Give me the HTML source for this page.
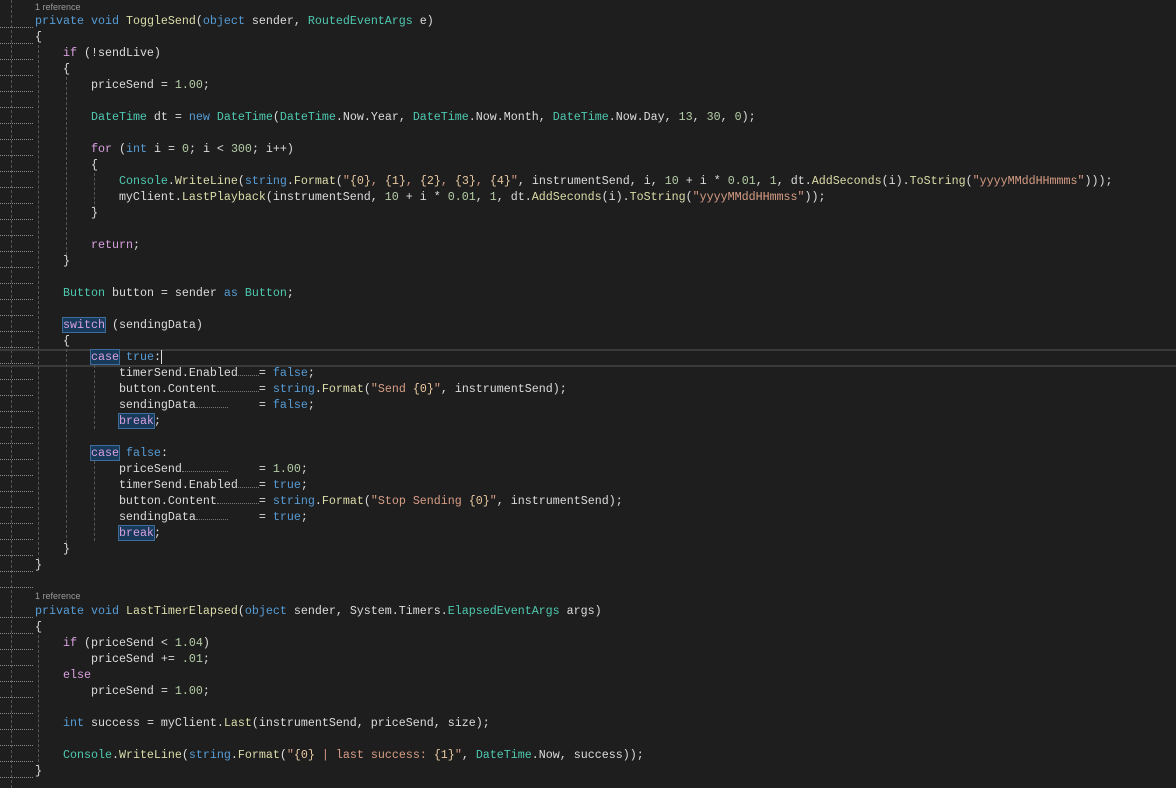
<!DOCTYPE html>
<html><head><meta charset="utf-8"><style>
html,body{margin:0;padding:0;background:#1e1e1e;width:1176px;height:788px;overflow:hidden;position:relative}
.l{position:absolute;left:35px;height:16px;line-height:16px;font-family:"Liberation Mono",monospace;font-size:11.67px;color:#dcdcdc;white-space:pre}
.k{color:#569cd6}.c{color:#d8a0df}.t{color:#4ec9b0}.m{color:#dcdcaa}.s{color:#d69d85}.n{color:#b5cea8}.p{color:#e8c9a0}
.h{background:#17395a;outline:1px solid #3f6d9a}
.d{display:inline-block;border-bottom:1px dotted #777;height:10px;vertical-align:top}
.sp{display:inline-block;height:10px;vertical-align:top}
.ref{position:absolute;left:35px;font-family:"Liberation Sans",sans-serif;font-size:9px;color:#999}
.g{position:absolute;width:0;border-left:1px dashed #555}
.mk{position:absolute;left:0;width:33px;border-top:1px dotted #888}
</style></head><body>
<div class="g" style="left:11px;top:0;height:788px"></div>
<div style="position:absolute;left:0;top:349px;width:1176px;height:14px;border-top:2px solid #3a3a3a;border-bottom:2px solid #3a3a3a"></div>
<div class="g" style="left:38px;top:45px;height:515px"></div>
<div class="g" style="left:66px;top:77px;height:178px"></div>
<div class="g" style="left:94px;top:173px;height:36px"></div>
<div class="g" style="left:66px;top:349px;height:194px"></div>
<div class="g" style="left:94px;top:365px;height:64px"></div>
<div class="g" style="left:94px;top:461px;height:80px"></div>
<div class="g" style="left:38px;top:635px;height:132px"></div>

<div class="ref" style="top:2px">1 reference</div>
<div class="l" style="top:13px"><span class="k">private</span> <span class="k">void</span> <span class="m">ToggleSend</span>(<span class="k">object</span> sender, <span class="t">RoutedEventArgs</span> e)</div>
<div class="l" style="top:29px">{</div>
<div class="l" style="top:45px">    <span class="c">if</span> (!sendLive)</div>
<div class="l" style="top:61px">    {</div>
<div class="l" style="top:77px">        priceSend = <span class="n">1.00</span>;</div>
<div class="l" style="top:109px">        <span class="t">DateTime</span> dt = <span class="k">new</span> <span class="t">DateTime</span>(<span class="t">DateTime</span>.Now.Year, <span class="t">DateTime</span>.Now.Month, <span class="t">DateTime</span>.Now.Day, <span class="n">13</span>, <span class="n">30</span>, <span class="n">0</span>);</div>
<div class="l" style="top:141px">        <span class="c">for</span> (<span class="k">int</span> i = <span class="n">0</span>; i &lt; <span class="n">300</span>; i++)</div>
<div class="l" style="top:157px">        {</div>
<div class="l" style="top:173px">            <span class="t">Console</span>.<span class="m">WriteLine</span>(<span class="k">string</span>.<span class="m">Format</span>(<span class="s">"</span><span class="p">{0}</span><span class="s">, </span><span class="p">{1}</span><span class="s">, </span><span class="p">{2}</span><span class="s">, </span><span class="p">{3}</span><span class="s">, </span><span class="p">{4}</span><span class="s">"</span>, instrumentSend, i, <span class="n">10</span> + i * <span class="n">0.01</span>, <span class="n">1</span>, dt.<span class="m">AddSeconds</span>(i).<span class="m">ToString</span>(<span class="s">"yyyyMMddHHmmms"</span>)));</div>
<div class="l" style="top:189px">            myClient.<span class="m">LastPlayback</span>(instrumentSend, <span class="n">10</span> + i * <span class="n">0.01</span>, <span class="n">1</span>, dt.<span class="m">AddSeconds</span>(i).<span class="m">ToString</span>(<span class="s">"yyyyMMddHHmmss"</span>));</div>
<div class="l" style="top:205px">        }</div>
<div class="l" style="top:237px">        <span class="c">return</span>;</div>
<div class="l" style="top:253px">    }</div>
<div class="l" style="top:285px">    <span class="t">Button</span> button = sender <span class="k">as</span> <span class="t">Button</span>;</div>
<div class="l" style="top:317px">    <span class="c h">switch</span> (sendingData)</div>
<div class="l" style="top:333px">    {</div>
<div class="l" style="top:349px">        <span class="c h">case</span> <span class="k">true</span>:<span style="border-left:1px solid #ddd"></span></div>
<div class="l" style="top:365px">            timerSend.Enabled<span class="d" style="width:21px"></span>= <span class="k">false</span>;</div>
<div class="l" style="top:381px">            button.Content<span class="d" style="width:42px"></span>= <span class="k">string</span>.<span class="m">Format</span>(<span class="s">"Send </span><span class="p">{0}</span><span class="s">"</span>, instrumentSend);</div>
<div class="l" style="top:397px">            sendingData<span class="d" style="width:32px"></span><span class="sp" style="width:31px"></span>= <span class="k">false</span>;</div>
<div class="l" style="top:413px">            <span class="c h">break</span>;</div>
<div class="l" style="top:445px">        <span class="c h">case</span> <span class="k">false</span>:</div>
<div class="l" style="top:461px">            priceSend<span class="d" style="width:46px"></span><span class="sp" style="width:31px"></span>= <span class="n">1.00</span>;</div>
<div class="l" style="top:477px">            timerSend.Enabled<span class="d" style="width:21px"></span>= <span class="k">true</span>;</div>
<div class="l" style="top:493px">            button.Content<span class="d" style="width:42px"></span>= <span class="k">string</span>.<span class="m">Format</span>(<span class="s">"Stop Sending </span><span class="p">{0}</span><span class="s">"</span>, instrumentSend);</div>
<div class="l" style="top:509px">            sendingData<span class="d" style="width:32px"></span><span class="sp" style="width:31px"></span>= <span class="k">true</span>;</div>
<div class="l" style="top:525px">            <span class="c h">break</span>;</div>
<div class="l" style="top:541px">    }</div>
<div class="l" style="top:557px">}</div>

<div class="ref" style="top:591px">1 reference</div>
<div class="l" style="top:603px"><span class="k">private</span> <span class="k">void</span> <span class="m">LastTimerElapsed</span>(<span class="k">object</span> sender, System.Timers.<span class="t">ElapsedEventArgs</span> args)</div>
<div class="l" style="top:619px">{</div>
<div class="l" style="top:635px">    <span class="c">if</span> (priceSend &lt; <span class="n">1.04</span>)</div>
<div class="l" style="top:651px">        priceSend += <span class="n">.01</span>;</div>
<div class="l" style="top:667px">    <span class="c">else</span></div>
<div class="l" style="top:683px">        priceSend = <span class="n">1.00</span>;</div>
<div class="l" style="top:715px">    <span class="k">int</span> success = myClient.<span class="m">Last</span>(instrumentSend, priceSend, size);</div>
<div class="l" style="top:747px">    <span class="t">Console</span>.<span class="m">WriteLine</span>(<span class="k">string</span>.<span class="m">Format</span>(<span class="s">"</span><span class="p">{0}</span><span class="s"> | last success: </span><span class="p">{1}</span><span class="s">"</span>, <span class="t">DateTime</span>.Now, success));</div>
<div class="l" style="top:763px">}</div>

<div class="mk" style="top:27px"></div><div class="mk" style="top:43px"></div><div class="mk" style="top:59px"></div><div class="mk" style="top:75px"></div><div class="mk" style="top:91px"></div><div class="mk" style="top:107px"></div><div class="mk" style="top:123px"></div><div class="mk" style="top:139px"></div><div class="mk" style="top:155px"></div><div class="mk" style="top:171px"></div><div class="mk" style="top:187px"></div><div class="mk" style="top:203px"></div><div class="mk" style="top:219px"></div><div class="mk" style="top:235px"></div><div class="mk" style="top:251px"></div><div class="mk" style="top:267px"></div><div class="mk" style="top:283px"></div><div class="mk" style="top:299px"></div><div class="mk" style="top:315px"></div><div class="mk" style="top:331px"></div><div class="mk" style="top:347px"></div><div class="mk" style="top:363px"></div><div class="mk" style="top:379px"></div><div class="mk" style="top:395px"></div><div class="mk" style="top:411px"></div><div class="mk" style="top:427px"></div><div class="mk" style="top:443px"></div><div class="mk" style="top:459px"></div><div class="mk" style="top:475px"></div><div class="mk" style="top:491px"></div><div class="mk" style="top:507px"></div><div class="mk" style="top:523px"></div><div class="mk" style="top:539px"></div><div class="mk" style="top:555px"></div><div class="mk" style="top:571px"></div><div class="mk" style="top:587px"></div><div class="mk" style="top:617px"></div><div class="mk" style="top:633px"></div><div class="mk" style="top:649px"></div><div class="mk" style="top:665px"></div><div class="mk" style="top:681px"></div><div class="mk" style="top:697px"></div><div class="mk" style="top:713px"></div><div class="mk" style="top:729px"></div><div class="mk" style="top:745px"></div><div class="mk" style="top:761px"></div><div class="mk" style="top:777px"></div>
</body></html>
